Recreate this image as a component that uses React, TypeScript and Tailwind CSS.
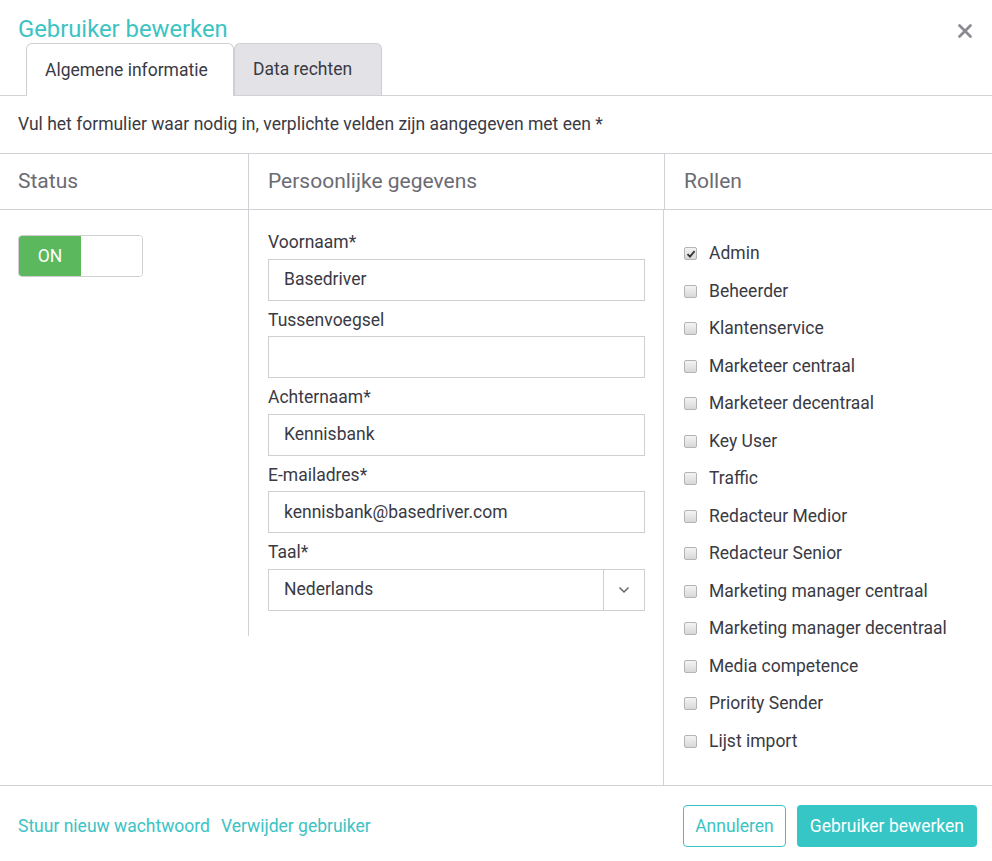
import { X, ChevronDown } from 'lucide-react'

const teal = 'text-[#3cc3c3]'

const roles = [
  { name: 'Admin', checked: true },
  { name: 'Beheerder' },
  { name: 'Klantenservice' },
  { name: 'Marketeer centraal' },
  { name: 'Marketeer decentraal' },
  { name: 'Key User' },
  { name: 'Traffic' },
  { name: 'Redacteur Medior' },
  { name: 'Redacteur Senior' },
  { name: 'Marketing manager centraal' },
  { name: 'Marketing manager decentraal' },
  { name: 'Media competence' },
  { name: 'Priority Sender' },
  { name: 'Lijst import' },
]

function Field({ label, value }: { label: string; value?: string }) {
  return (
    <div>
      <div className="h-[27.5px] text-[17.5px] leading-[22px] text-[#3a3a44]">{label}</div>
      <div className="h-[42px] border border-[#cfcfd3] px-[15px] flex items-center text-[17.5px] text-[#3a3a44]">
        {value}
      </div>
    </div>
  )
}

function Checkbox({ checked }: { checked?: boolean }) {
  return (
    <span className="w-[13px] h-[13px] rounded-[2px] border border-[#b4b4b8] bg-gradient-to-b from-[#f4f4f4] to-[#d8d8d8] flex items-center justify-center">
      {checked && (
        <svg width="10" height="10" viewBox="0 0 10 10">
          <path d="M1.5 5.2 L4 7.6 L8.6 2.2" stroke="#333" strokeWidth="1.8" fill="none" />
        </svg>
      )}
    </span>
  )
}

export default function App() {
  return (
    <div className="w-[992px] h-[861px] bg-white font-['Roboto',sans-serif] text-[#3a3a44] flex flex-col">
      {/* header */}
      <div className="relative h-[96px] border-b border-[#d2d2d6] flex flex-col">
        <h1 className={`pl-[18px] pt-[15px] text-[23.8px] leading-[29px] ${teal}`}>Gebruiker bewerken</h1>
        <button className="absolute right-[16px] top-[20px] text-[#8a8a92]">
          <X size={22} strokeWidth={3} />
        </button>
        <div className="flex pl-[26px] mt-[-1px] items-end">
          <div className="w-[208px] h-[53px] bg-white border border-b-0 border-[#cfcfd3] rounded-t-[6px] flex items-center pl-[18px] text-[17.5px] text-[#3a3a44] mb-[-1px] relative z-10">
            Algemene informatie
          </div>
          <div className="w-[148px] h-[52px] bg-[#e3e3e7] border border-b-0 border-[#cfcfd3] rounded-t-[6px] flex items-center pl-[18px] text-[17.5px] text-[#3a3a44]">
            Data rechten
          </div>
        </div>
      </div>

      {/* intro */}
      <div className="h-[58px] border-b border-[#d2d2d6] pl-[18px] flex items-center text-[17.5px] text-[#3a3a44]">
        Vul het formulier waar nodig in, verplichte velden zijn aangegeven met een *
      </div>

      {/* columns */}
      <div className="flex-1 flex flex-col">
        <div className="h-[56px] border-b border-[#d2d2d6] flex text-[21px] text-[#6b6b73]">
          <div className="w-[249px] border-r border-[#d2d2d6] pl-[18px] flex items-center">Status</div>
          <div className="w-[416px] border-r border-[#d2d2d6] pl-[19px] flex items-center">Persoonlijke gegevens</div>
          <div className="flex-1 pl-[19px] flex items-center">Rollen</div>
        </div>
        <div className="flex-1 flex">
          <div className="w-[249px] pl-[18px] pt-[25px]">
            <div className="w-[125px] h-[42px] border border-[#cfcfd3] rounded-[4px] flex overflow-hidden">
              <div className="w-[62px] bg-[#5cb85c] text-white text-[17.5px] flex items-center justify-center">ON</div>
              <div className="flex-1 bg-white" />
            </div>
          </div>
          <div className="w-[416px] self-start h-[426px] border-l border-r border-[#d2d2d6] ml-[-1px] pl-[19px] pr-[18px] pt-[21px] flex flex-col gap-[8px]">
            <Field label="Voornaam*" value="Basedriver" />
            <Field label="Tussenvoegsel" />
            <Field label="Achternaam*" value="Kennisbank" />
            <Field label="E-mailadres*" value="kennisbank@basedriver.com" />
            <div>
              <div className="h-[27.5px] text-[17.5px] leading-[22px] text-[#3a3a44]">Taal*</div>
              <div className="h-[42px] border border-[#cfcfd3] flex items-center text-[17.5px] text-[#3a3a44]">
                <div className="flex-1 px-[15px]">Nederlands</div>
                <div className="w-[41px] h-full border-l border-[#cfcfd3] flex items-center justify-center text-[#6b6b73]">
                  <ChevronDown size={16} strokeWidth={2.5} />
                </div>
              </div>
            </div>
          </div>
          <div className="flex-1 border-l border-[#d2d2d6] ml-[-1px] pl-[20px] pt-[32px] flex flex-col">
            {roles.map((r) => (
              <div key={r.name} className="h-[37.5px] flex items-start gap-[12px]">
                <div className="pt-[5px]">
                  <Checkbox checked={r.checked} />
                </div>
                <span className="text-[17.5px] leading-[22px] text-[#3a3a44]">{r.name}</span>
              </div>
            ))}
          </div>
        </div>
      </div>

      {/* footer */}
      <div className="h-[76px] border-t border-[#d2d2d6] flex items-center pl-[18px] pr-[15px] pt-[5px]">
        <div className={`flex gap-[11px] text-[17.5px] ${teal}`}>
          <span>Stuur nieuw wachtwoord</span>
          <span>Verwijder gebruiker</span>
        </div>
        <div className="ml-auto flex gap-[11px]">
          <button className={`h-[42px] px-[11px] border border-[#3cc3c3] rounded-[4px] text-[17.5px] ${teal}`}>
            Annuleren
          </button>
          <button className="h-[42px] px-[13px] bg-[#36c6c6] rounded-[4px] text-[17.5px] text-white">
            Gebruiker bewerken
          </button>
        </div>
      </div>
    </div>
  )
}
